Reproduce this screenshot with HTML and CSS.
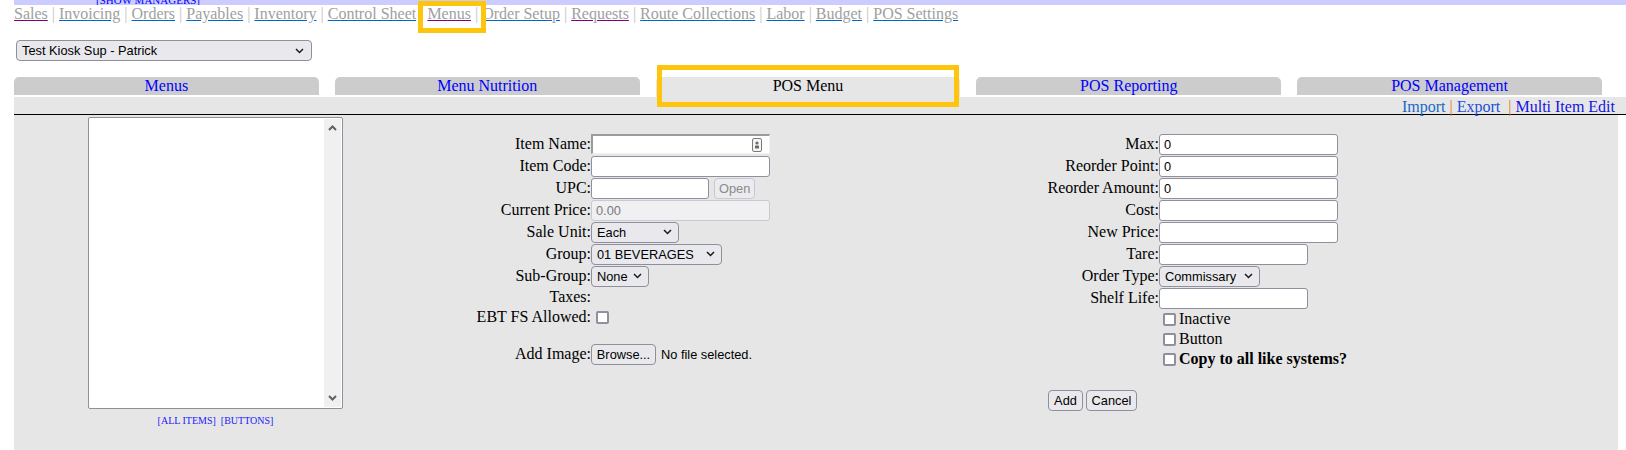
FILE: index.html
```html
<!DOCTYPE html>
<html>
<head>
<meta charset="utf-8">
<title>POS Menu</title>
<link rel="stylesheet" href="styles.css">
</head>
<body>
<div class="page">
  <div class="topbar"><a class="show-mgr" href="#">[SHOW MANAGERS]</a></div>
  <nav class="nav">
    <a class="visited" href="#">Sales</a> | <a href="#">Invoicing</a> | <a href="#">Orders</a> | <a href="#">Payables</a> | <a href="#">Inventory</a> | <a href="#">Control Sheet</a> | <a class="visited" href="#">Menus</a> | <a href="#">Order Setup</a> | <a class="visited" href="#">Requests</a> | <a href="#">Route Collections</a> | <a href="#">Labor</a> | <a href="#">Budget</a> | <a href="#">POS Settings</a>
  </nav>
  <div class="store">
    <div class="select store-select"><span>Test Kiosk Sup - Patrick</span><svg width="9" height="6" viewBox="0 0 9 6"><path d="M1 1l3.5 3.5L8 1" fill="none" stroke="#1b1b1b" stroke-width="1.5"/></svg></div>
  </div>
  <div class="tabs">
    <div class="tab"><a href="#">Menus</a></div>
    <div class="tab"><a href="#">Menu Nutrition</a></div>
    <div class="tab active">POS Menu</div>
    <div class="tab"><a href="#">POS Reporting</a></div>
    <div class="tab"><a href="#">POS Management</a></div>
  </div>
  <div class="band"><a class="lnk-import" href="#">Import</a> <span class="osep">|</span> <a class="lnk-export" href="#">Export</a>&nbsp; <span class="osep">|</span> <a class="lnk-multi" href="#">Multi Item Edit</a></div>
  <div class="content">
    <div class="list-col">
      <div class="listbox">
        <div class="lb-scroll">
          <svg width="9" height="6" viewBox="0 0 9 6"><path d="M1 5l3.5-3.5L8 5" fill="none" stroke="#606060" stroke-width="2"/></svg>
          <svg width="9" height="6" viewBox="0 0 9 6"><path d="M1 1l3.5 3.5L8 1" fill="none" stroke="#606060" stroke-width="2"/></svg>
        </div>
      </div>
      <div class="list-links"><a href="#">[ALL ITEMS]</a>&nbsp; <a href="#">[BUTTONS]</a></div>
    </div>

    <div class="form form-left">
      <div class="lbl">Item Name:</div>
      <div class="fld"><span class="name-wrap"><input class="inp inp-name" type="text"><svg class="autofill-ico" width="10" height="14" viewBox="0 0 10 14"><rect x="0.5" y="0.5" width="9" height="13" rx="1.5" fill="#f6f6f6" stroke="#7a7a7a"/><circle cx="5" cy="5" r="1.6" fill="#6a6a6a"/><rect x="3" y="7.5" width="4" height="3" rx="0.5" fill="#6a6a6a"/></svg></span></div>

      <div class="lbl">Item Code:</div>
      <div class="fld"><input class="inp" type="text"></div>

      <div class="lbl">UPC:</div>
      <div class="fld"><input class="inp inp-upc" type="text"><button class="btn btn-open" disabled>Open</button></div>

      <div class="lbl">Current Price:</div>
      <div class="fld"><input class="inp inp-disabled" type="text" value="0.00" disabled></div>

      <div class="lbl">Sale Unit:</div>
      <div class="fld"><div class="select sel-unit"><span>Each</span><svg width="9" height="6" viewBox="0 0 9 6"><path d="M1 1l3.5 3.5L8 1" fill="none" stroke="#1b1b1b" stroke-width="1.5"/></svg></div></div>

      <div class="lbl">Group:</div>
      <div class="fld"><div class="select sel-group"><span>01 BEVERAGES</span><svg width="9" height="6" viewBox="0 0 9 6"><path d="M1 1l3.5 3.5L8 1" fill="none" stroke="#1b1b1b" stroke-width="1.5"/></svg></div></div>

      <div class="lbl">Sub-Group:</div>
      <div class="fld"><div class="select sel-sub"><span>None</span><svg width="9" height="6" viewBox="0 0 9 6"><path d="M1 1l3.5 3.5L8 1" fill="none" stroke="#1b1b1b" stroke-width="1.5"/></svg></div></div>

      <div class="lbl">Taxes:</div>
      <div class="fld"></div>

      <div class="lbl">EBT FS Allowed:</div>
      <div class="fld"><input class="cb cb-ebt" type="checkbox"></div>

      <div class="lbl"></div>
      <div class="fld"></div>

      <div class="lbl">Add Image:</div>
      <div class="fld"><button class="btn btn-browse">Browse...</button><span class="file-note">No file selected.</span></div>
    </div>

    <div class="form form-right">
      <div class="lbl">Max:</div>
      <div class="fld"><input class="inp" type="text" value="0"></div>

      <div class="lbl">Reorder Point:</div>
      <div class="fld"><input class="inp" type="text" value="0"></div>

      <div class="lbl">Reorder Amount:</div>
      <div class="fld"><input class="inp" type="text" value="0"></div>

      <div class="lbl">Cost:</div>
      <div class="fld"><input class="inp" type="text"></div>

      <div class="lbl">New Price:</div>
      <div class="fld"><input class="inp" type="text"></div>

      <div class="lbl">Tare:</div>
      <div class="fld"><input class="inp inp-short" type="text"></div>

      <div class="lbl">Order Type:</div>
      <div class="fld"><div class="select sel-order"><span>Commissary</span><svg width="9" height="6" viewBox="0 0 9 6"><path d="M1 1l3.5 3.5L8 1" fill="none" stroke="#1b1b1b" stroke-width="1.5"/></svg></div></div>

      <div class="lbl">Shelf Life:</div>
      <div class="fld"><input class="inp inp-short" type="text"></div>

      <div class="lbl"></div>
      <div class="fld"><input class="cb" type="checkbox"><span>Inactive</span></div>

      <div class="lbl"></div>
      <div class="fld"><input class="cb" type="checkbox"><span>Button</span></div>

      <div class="lbl"></div>
      <div class="fld"><input class="cb" type="checkbox"><b>Copy to all like systems?</b></div>

      <div class="lbl"></div>
      <div class="fld"></div>

      <div class="actions"><button class="btn btn-add">Add</button><button class="btn btn-cancel">Cancel</button></div>
    </div>
  </div>
</div>
<div class="mark mark-nav"></div>
<div class="mark mark-tab"></div>
</body>
</html>
```

FILE: styles.css
```css
html, body {
  margin: 0;
  padding: 0;
  background: #ffffff;
}
body {
  font-family: "Liberation Serif", "Times New Roman", serif;
  font-size: 16px;
  color: #000;
  position: relative;
  overflow: hidden;
}
.page {
  margin: 0 8px 0 14px;
}

/* top bar */
.topbar {
  height: 5px;
  background: #ccccff;
  margin-right: -8px;
  overflow: hidden;
  padding-left: 82px;
}
.show-mgr {
  display: block;
  font-size: 11px;
  line-height: 11px;
  margin-top: -5px;
  color: #0000ff;
  text-decoration: none;
}

/* nav */
.nav {
  height: 18px;
  color: #c4c4c4;
  white-space: nowrap;
}
.nav a {
  color: #a0a0a0;
  text-decoration: underline;
  text-decoration-color: #0066cc;
}
.nav a.visited {
  text-decoration-color: #800080;
}

/* generic select look */
.select {
  display: inline-flex;
  align-items: center;
  justify-content: space-between;
  box-sizing: border-box;
  height: 21px;
  border: 1px solid #8f8f9d;
  border-radius: 4px;
  background: #e9e9ed;
  font-family: "Liberation Sans", Arial, sans-serif;
  font-size: 12.8px;
  padding: 0 6px 0 5px;
  color: #000;
  white-space: nowrap;
}
.select svg {
  flex: none;
}
.sel-unit { width: 88px; }
.sel-group { width: 131px; }
.sel-sub { width: 58px; }
.sel-order { width: 101px; }

.store {
  margin-top: 17px;
  height: 21px;
}
.store-select {
  width: 296px;
  margin-left: 2px;
  padding-left: 5px;
  padding-right: 7px;
}

/* tabs */
.tabs {
  display: flex;
  align-items: flex-start;
  margin-top: 16px;
  height: 20px;
}
.tab {
  flex: 1 1 0;
  height: 18px;
  line-height: 18px;
  background: #cccccc;
  border-radius: 5px 5px 0 0;
  text-align: center;
  white-space: nowrap;
  margin-right: 16px;
}
.tab a {
  color: #0000ff;
  text-decoration: none;
}
.tab.active {
  height: 20px;
  background: #e6e6e6;
  color: #000;
}

/* band with links */
.band {
  height: 17px;
  line-height: 19px;
  background: #e6e6e6;
  border-bottom: 1px solid #000;
  margin-right: -8px;
  padding-right: 11px;
  text-align: right;
  white-space: nowrap;
}
.band a {
  text-decoration: none;
}
.lnk-import { color: #1a66c8; }
.lnk-export { color: #1d4fd6; }
.lnk-multi { color: #1414e0; }
.osep { color: #e07b2a; }

/* content */
.content {
  background: #e6e6e6;
  display: flex;
  align-items: flex-start;
  min-height: 340px;
}
.list-col {
  width: 403px;
  flex: none;
  display: flex;
  flex-direction: column;
  align-items: center;
  padding-top: 2px;
}
.listbox {
  width: 255px;
  height: 292px;
  box-sizing: border-box;
  border: 1px solid #8f8f9d;
  border-radius: 2px;
  background: #fff;
  display: flex;
  justify-content: flex-end;
  padding: 1px;
}
.lb-scroll {
  width: 17px;
  background: #f0f0f0;
  display: flex;
  flex-direction: column;
  justify-content: space-between;
  align-items: center;
  padding: 6px 0 6px;
  box-sizing: border-box;
}
.list-links {
  margin-top: 6px;
  font-size: 10px;
  white-space: nowrap;
}
.list-links a {
  color: #1a1aff;
  text-decoration: none;
}

/* forms */
.form {
  display: grid;
  margin-top: 18px;
  flex: none;
}
.form-left {
  margin-left: 58px;
  grid-template-columns: 116px 179px;
  grid-template-rows: repeat(7, 22px) 20px 20px 16px 22px;
}
.form-right {
  margin-left: 277px;
  grid-template-columns: 112px auto;
  grid-template-rows: repeat(8, 22px) repeat(4, 20px) 22px;
}
.lbl {
  text-align: right;
  align-self: center;
  line-height: 18px;
  white-space: nowrap;
}
.fld {
  display: flex;
  align-items: center;
  white-space: nowrap;
}

.inp {
  box-sizing: border-box;
  height: 21px;
  width: 179px;
  margin: 0;
  border: 1px solid #8f8f9d;
  border-radius: 3px;
  background: #fff;
  font-family: "Liberation Sans", Arial, sans-serif;
  font-size: 12.8px;
  padding: 0 4px;
  color: #000;
  outline: none;
}
.inp-name {
  height: 20px;
  border-style: solid;
  border-width: 2px 1px 1px 2px;
  border-color: #9a9a9a #f2f2f2 #f2f2f2 #9a9a9a;
  border-radius: 0;
}
.name-wrap {
  position: relative;
  display: inline-block;
  height: 20px;
}
.autofill-ico {
  position: absolute;
  right: 8px;
  top: 4px;
}
.inp-upc { width: 118px; }
.inp-short { width: 149px; }
.inp-disabled {
  background: #f0f0f2;
  border-color: #c9c9cf;
  color: #7a7a7a;
}

.btn {
  box-sizing: border-box;
  height: 21px;
  margin: 0;
  border: 1px solid #8f8f9d;
  border-radius: 4px;
  background: #e9e9ed;
  font-family: "Liberation Sans", Arial, sans-serif;
  font-size: 12.8px;
  padding: 0 4px;
  color: #000;
}
.btn-open {
  width: 41px;
  margin-left: 5px;
  color: #8a8a8a;
  border-color: #c8c8ce;
  background: #ececf0;
}
.btn-browse {
  width: 65px;
}
.btn-add { width: 35px; }
.btn-cancel { width: 51px; }
.file-note {
  margin-left: 5px;
  font-family: "Liberation Sans", Arial, sans-serif;
  font-size: 12.8px;
}

.cb {
  appearance: none;
  -webkit-appearance: none;
  width: 13px;
  height: 13px;
  margin: 3px 3px 3px 4px;
  box-sizing: border-box;
  border: 2px solid #8f8f9d;
  border-radius: 2px;
  background: #fff;
  flex: none;
}
.cb-ebt {
  margin-left: 5px;
}

.actions {
  grid-column: 1 / -1;
  display: flex;
  align-items: center;
  gap: 3px;
  margin-left: 1px;
}

/* annotation highlight boxes */
.mark {
  position: absolute;
  box-sizing: border-box;
  border: 5px solid #ffc40c;
}
.mark-nav {
  left: 418px;
  top: 1px;
  width: 68px;
  height: 32px;
}
.mark-tab {
  left: 657px;
  top: 65px;
  width: 302px;
  height: 42px;
}
```
